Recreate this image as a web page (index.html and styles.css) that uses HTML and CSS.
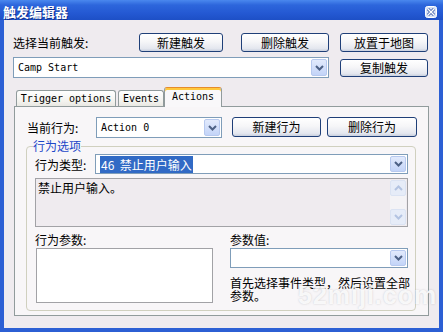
FILE: index.html
```html
<!DOCTYPE html>
<html lang="zh-CN">
<head>
    <meta charset="UTF-8">
    <meta name="viewport" content="width=device-width, initial-scale=1.0">
    <title>触发编辑器</title>
    <link rel="stylesheet" href="styles.css">
</head>
<body>
    <div class="window">
        <div class="titlebar">
            <span class="title">触发编辑器</span>
            <span class="close-btn">
                <svg width="12" height="12" viewBox="0 0 12 12">
                    <rect x="0.5" y="0.5" width="11" height="11" rx="2" fill="#d9e2f5" stroke="#ffffff"/>
                    <path d="M3 3l6 6M9 3l-6 6" stroke="#3a5aa8" stroke-width="3"/>
                    <path d="M3 3l6 6M9 3l-6 6" stroke="#ffffff" stroke-width="1.4"/>
                </svg>
            </span>
        </div>

        <div class="client">
            <!-- trigger selection -->
            <div class="row row-top">
                <span class="label label-trigger">选择当前触发:</span>
                <button class="btn btn-new">新建触发</button>
                <button class="btn btn-del">删除触发</button>
                <button class="btn btn-place">放置于地图</button>
            </div>
            <div class="row row-combo">
                <div class="combo combo-trigger">
                    <span class="combo-text mono">Camp Start</span>
                    <span class="combo-arrow"><svg width="9" height="6" viewBox="0 0 9 6"><path d="M1 1l3.5 3.5L8 1" fill="none" stroke="#4d6185" stroke-width="2"/></svg></span>
                </div>
                <button class="btn btn-copy">复制触发</button>
            </div>

            <!-- tabs -->
            <div class="tabs">
                <div class="tab tab-options">Trigger options</div>
                <div class="tab tab-events">Events</div>
                <div class="tab tab-actions active">Actions</div>
            </div>
            <div class="tab-panel">
                <div class="row row-action">
                    <span class="label label-action">当前行为:</span>
                    <div class="combo combo-action">
                        <span class="combo-text mono">Action 0</span>
                        <span class="combo-arrow"><svg width="9" height="6" viewBox="0 0 9 6"><path d="M1 1l3.5 3.5L8 1" fill="none" stroke="#4d6185" stroke-width="2"/></svg></span>
                    </div>
                    <button class="btn btn-newact">新建行为</button>
                    <button class="btn btn-delact">删除行为</button>
                </div>

                <fieldset class="group">
                    <legend>行为选项</legend>
                    <div class="row row-type">
                        <span class="label label-type">行为类型:</span>
                        <div class="combo combo-type">
                            <span class="combo-text"><span class="selected">46&nbsp;&nbsp;禁止用户输入</span></span>
                            <span class="combo-arrow"><svg width="9" height="6" viewBox="0 0 9 6"><path d="M1 1l3.5 3.5L8 1" fill="none" stroke="#4d6185" stroke-width="2"/></svg></span>
                        </div>
                    </div>

                    <div class="desc">
                        <span class="desc-text">禁止用户输入。</span>
                        <div class="scrollbar">
                            <span class="scroll-btn"><svg width="9" height="6" viewBox="0 0 9 6"><path d="M1 5l3.5-3.5L8 5" fill="none" stroke="#b3c3e2" stroke-width="2"/></svg></span>
                            <span class="scroll-btn"><svg width="9" height="6" viewBox="0 0 9 6"><path d="M1 1l3.5 3.5L8 1" fill="none" stroke="#b3c3e2" stroke-width="2"/></svg></span>
                        </div>
                    </div>

                    <div class="params">
                        <div class="param-left">
                            <div class="param-label">行为参数:</div>
                            <div class="listbox"></div>
                        </div>
                        <div class="param-right">
                            <div class="param-label">参数值:</div>
                            <div class="combo combo-param">
                                <span class="combo-text"></span>
                                <span class="combo-arrow"><svg width="9" height="6" viewBox="0 0 9 6"><path d="M1 1l3.5 3.5L8 1" fill="none" stroke="#4d6185" stroke-width="2"/></svg></span>
                            </div>
                            <p class="hint"><span>首先选择事件类型，然后设置全部参数。</span></p>
                        </div>
                    </div>
                </fieldset>
            </div>
        </div>

        <div class="watermark">52miji.com</div>
    </div>
</body>
</html>
```

FILE: styles.css
```css
* {
    box-sizing: border-box;
}

body {
    margin: 0;
    font-family: "Noto Sans CJK SC", sans-serif;
    font-size: 12px;
    color: #000;
}

.mono {
    font-family: "DejaVu Sans Mono", monospace;
    font-size: 10px;
}

.window {
    position: relative;
    width: 443px;
    height: 332px;
    display: flex;
    flex-direction: column;
    background: #2c5fd4;
    overflow: hidden;
}

.titlebar {
    height: 20px;
    flex: none;
    display: flex;
    align-items: center;
    padding: 3px 6px 0 3px;
    background: linear-gradient(#4a88ee, #2d66dc 25%, #2459d3 65%, #1d4fc6);
}

.title {
    flex: 1;
    color: #fff;
    font-weight: bold;
    font-size: 13px;
    line-height: 16px;
    text-shadow: 1px 1px 0 #10308c;
}

.close-btn {
    display: flex;
    width: 12px;
    height: 12px;
}

.client {
    flex: 1;
    margin: 0 4px 4px;
    background: #efebef;
    padding: 13px 11px 0 9px;
}

.row {
    display: flex;
    align-items: center;
}

.btn {
    height: 19px;
    padding: 0;
    font: 12px "Noto Sans CJK SC", sans-serif;
    line-height: 16px;
    color: #000;
    border: 1px solid #1f3f78;
    border-radius: 3px;
    background: linear-gradient(#ffffff, #f6f6f8 45%, #e4e7ef 85%, #c9d0de);
}

/* top rows */
.row-top {
    height: 19px;
}

.label-trigger {
    width: 126px;
}

.btn-new {
    width: 84px;
}

.btn-del {
    width: 88px;
    margin-left: 18px;
}

.btn-place {
    width: 88px;
    margin-left: 11px;
}

.row-combo {
    margin-top: 5px;
}

.combo {
    display: flex;
    align-items: center;
    background: #fff;
    border: 1px solid #7f9db9;
    padding: 1px;
}

.combo-text {
    flex: 1;
    padding-left: 3px;
    white-space: nowrap;
}

.combo-arrow {
    width: 16px;
    align-self: stretch;
    display: flex;
    align-items: center;
    justify-content: center;
    border: 1px solid #b7c9ef;
    border-radius: 2px;
    background: linear-gradient(#e2eafc, #c3d4f8);
}

.combo-trigger {
    width: 316px;
    height: 21px;
}

.btn-copy {
    width: 88px;
    height: 18px;
    margin-left: 11px;
}

/* tabs */
.tabs {
    position: relative;
    z-index: 1;
    display: flex;
    align-items: flex-end;
    height: 20px;
    margin: 9px 0 0 1px;
    padding-left: 2px;
}

.tab {
    height: 16px;
    margin-bottom: 1px;
    display: flex;
    align-items: center;
    justify-content: center;
    font-family: "DejaVu Sans Mono", monospace;
    font-size: 10px;
    border: 1px solid #919b9c;
    border-bottom: 0;
    border-radius: 3px 3px 0 0;
    background: linear-gradient(#ffffff, #f3f2ee 70%, #e9e8e3);
}

.tab-options {
    width: 100px;
    margin-right: 2px;
}

.tab-events {
    width: 46px;
}

.tab-actions {
    width: 58px;
}

.tab.active {
    height: 20px;
    margin-bottom: 0;
    padding-bottom: 3px;
    border-top: 1px solid #e68b2c;
    box-shadow: inset 0 2px 0 #ffc83c;
    background: #f9f8fa;
}

.tab-panel {
    width: 415px;
    height: 210px;
    margin: -1px 0 0 1px;
    padding: 10px 0 0 11px;
    border: 1px solid #919b9c;
    background: #f8f6f8;
}

.row-action {
    align-items: flex-start;
    height: 21px;
}

.label-action {
    width: 69px;
    margin-left: 1px;
    line-height: 21px;
}

.combo-action {
    width: 126px;
    height: 21px;
}

.btn-newact {
    width: 89px;
    height: 20px;
    margin-left: 10px;
}

.btn-delact {
    width: 90px;
    height: 20px;
    margin-left: 6px;
}

/* group box */
.group {
    width: 390px;
    margin: 1px 0 0 0;
    padding: 0 7px 7px 8px;
    min-width: 0;
    border: 1px solid #d0d0bf;
    border-radius: 4px;
}

.group legend {
    padding: 0;
    margin-left: -2px;
    line-height: 14px;
    color: #1c47c8;
}

.row-type {
    margin-top: 1px;
    height: 20px;
}

.label-type {
    width: 60px;
}

.combo-type {
    width: 313px;
    height: 20px;
}

.selected {
    background: #316ac5;
    color: #fff;
    padding: 0 1px;
}

.desc {
    display: flex;
    height: 49px;
    margin-top: 4px;
    border: 1px solid #a2a2a6;
    background: #efebef;
}

.desc-text {
    flex: 1;
    padding: 2px 2px;
    line-height: 14px;
}

.scrollbar {
    width: 16px;
    margin: 1px;
    display: flex;
    flex-direction: column;
    justify-content: space-between;
    background: #f4f3f6;
}

.scroll-btn {
    height: 16px;
    display: flex;
    align-items: center;
    justify-content: center;
    border: 1px solid #dbe3f3;
    border-radius: 2px;
    background: #e6ecf8;
}

.params {
    display: flex;
    margin-top: 6px;
}

.param-left {
    width: 178px;
}

.param-right {
    width: 178px;
    margin-left: 17px;
}

.param-label {
    height: 15px;
    line-height: 14px;
}

.listbox {
    width: 177px;
    height: 55px;
    margin-left: 1px;
    background: #fff;
    border: 1px solid #a2a2a6;
}

.combo-param {
    height: 20px;
}

.hint {
    margin: 8px -4px 0 0;
    line-height: 13px;
}

.watermark {
    position: absolute;
    left: 298px;
    top: 281px;
    font-family: "Liberation Sans", sans-serif;
    font-size: 25px;
    font-weight: bold;
    line-height: 28px;
    letter-spacing: 1px;
    color: rgba(255, 255, 255, 0.85);
    text-shadow: 0 0 2px rgba(120, 120, 130, 0.35);
}
```
